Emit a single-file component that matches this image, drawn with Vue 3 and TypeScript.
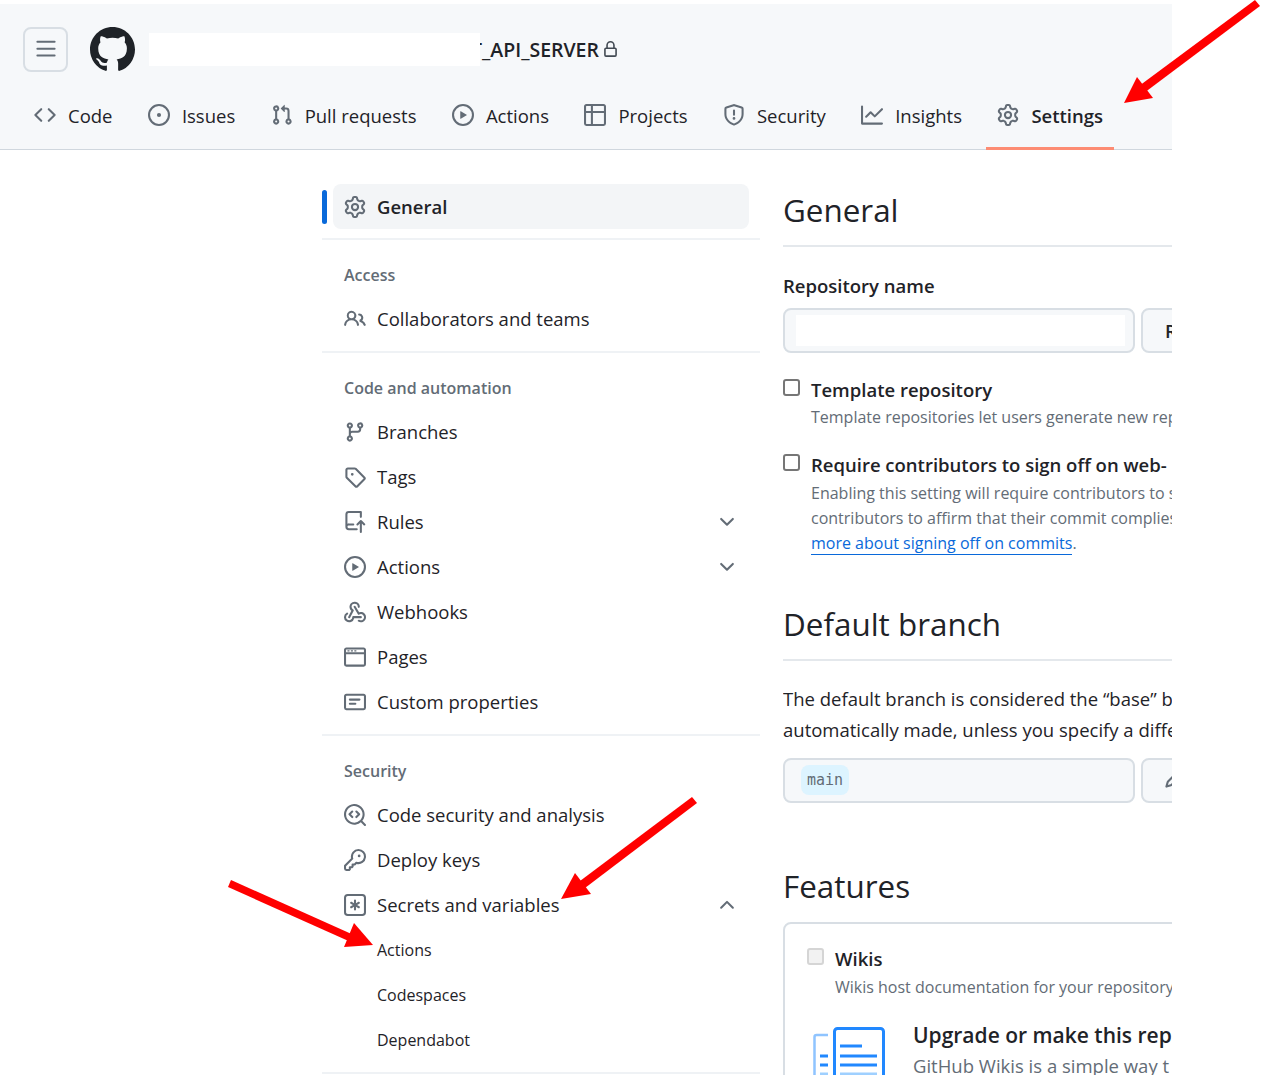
<script setup lang="ts">
type IconName = keyof typeof icons

const icons = {
  bars: 'M1 2.75A.75.75 0 0 1 1.75 2h12.5a.75.75 0 0 1 0 1.5H1.75A.75.75 0 0 1 1 2.75Zm0 5A.75.75 0 0 1 1.75 7h12.5a.75.75 0 0 1 0 1.5H1.75A.75.75 0 0 1 1 7.75ZM1.75 12h12.5a.75.75 0 0 1 0 1.5H1.75a.75.75 0 0 1 0-1.5Z',
  github: 'M8 0c4.42 0 8 3.58 8 8a8.013 8.013 0 0 1-5.45 7.59c-.4.08-.55-.17-.55-.38 0-.27.01-1.13.01-2.2 0-.75-.25-1.23-.54-1.48 1.78-.2 3.65-.88 3.65-3.95 0-.88-.31-1.59-.82-2.15.08-.2.36-1.02-.08-2.12 0 0-.67-.22-2.2.82-.64-.18-1.32-.27-2-.27-.68 0-1.36.09-2 .27-1.53-1.03-2.2-.82-2.2-.82-.44 1.1-.16 1.92-.08 2.12-.51.56-.82 1.28-.82 2.15 0 3.06 1.86 3.75 3.64 3.95-.23.2-.44.55-.51 1.07-.46.21-1.61.55-2.33-.66-.15-.24-.6-.83-1.23-.82-.67.01-.27.38.01.53.34.19.73.9.82 1.13.16.45.68 1.31 2.69.94 0 .67.01 1.3.01 1.49 0 .21-.15.45-.55.38A7.995 7.995 0 0 1 0 8c0-4.42 3.58-8 8-8Z',
  lock: 'M4 4a4 4 0 0 1 8 0v2h.25c.966 0 1.75.784 1.75 1.75v5.5A1.75 1.75 0 0 1 12.25 15h-8.5A1.75 1.75 0 0 1 2 13.25v-5.5C2 6.784 2.784 6 3.75 6H4Zm8.25 3.5h-8.5a.25.25 0 0 0-.25.25v5.5c0 .138.112.25.25.25h8.5a.25.25 0 0 0 .25-.25v-5.5a.25.25 0 0 0-.25-.25ZM10.5 6V4a2.5 2.5 0 1 0-5 0v2Z',
  code: 'm11.28 3.22 4.25 4.25a.75.75 0 0 1 0 1.06l-4.25 4.25a.749.749 0 0 1-1.275-.326.749.749 0 0 1 .215-.734L13.94 8l-3.72-3.72a.749.749 0 0 1 .326-1.275.749.749 0 0 1 .734.215Zm-6.56 0a.751.751 0 0 1 1.042.018.751.751 0 0 1 .018 1.042L2.06 8l3.72 3.72a.749.749 0 0 1-.326 1.275.749.749 0 0 1-.734-.215L.47 8.53a.75.75 0 0 1 0-1.06Z',
  issue: 'M8 9.5a1.5 1.5 0 1 0 0-3 1.5 1.5 0 0 0 0 3Z M8 0a8 8 0 1 1 0 16A8 8 0 0 1 8 0ZM1.5 8a6.5 6.5 0 1 0 13 0 6.5 6.5 0 0 0-13 0Z',
  pull: 'M1.5 3.25a2.25 2.25 0 1 1 3 2.122v5.256a2.251 2.251 0 1 1-1.5 0V5.372A2.25 2.25 0 0 1 1.5 3.25Zm5.677-.177L9.573.677A.25.25 0 0 1 10 .854V2.5h1A2.5 2.5 0 0 1 13.5 5v5.628a2.251 2.251 0 1 1-1.5 0V5a1 1 0 0 0-1-1h-1v1.646a.25.25 0 0 1-.427.177L7.177 3.427a.25.25 0 0 1 0-.354ZM3.75 2.5a.75.75 0 1 0 0 1.5.75.75 0 0 0 0-1.5Zm0 9.5a.75.75 0 1 0 0 1.5.75.75 0 0 0 0-1.5Zm8.25.75a.75.75 0 1 0 1.5 0 .75.75 0 0 0-1.5 0Z',
  play: 'M8 0a8 8 0 1 1 0 16A8 8 0 0 1 8 0ZM1.5 8a6.5 6.5 0 1 0 13 0 6.5 6.5 0 0 0-13 0Zm4.879-2.773 4.264 2.559a.25.25 0 0 1 0 .428l-4.264 2.559A.25.25 0 0 1 6 10.559V5.442a.25.25 0 0 1 .379-.215Z',
  table: 'M0 1.75C0 .784.784 0 1.75 0h12.5C15.216 0 16 .784 16 1.75v12.5A1.75 1.75 0 0 1 14.25 16H1.75A1.75 1.75 0 0 1 0 14.25ZM6.5 6.5v8h7.75a.25.25 0 0 0 .25-.25V6.5Zm8-1.5V1.75a.25.25 0 0 0-.25-.25H6.5V5Zm-13 1.5v7.75c0 .138.112.25.25.25H5v-8ZM5 5V1.5H1.75a.25.25 0 0 0-.25.25V5Z',
  shield: 'M7.467.133a1.748 1.748 0 0 1 1.066 0l5.25 1.68A1.75 1.75 0 0 1 15 3.48V7c0 1.566-.32 3.182-1.303 4.682-.983 1.498-2.585 2.813-5.032 3.855a1.697 1.697 0 0 1-1.33 0c-2.447-1.042-4.049-2.357-5.032-3.855C1.32 10.182 1 8.566 1 7V3.48a1.75 1.75 0 0 1 1.217-1.667Zm.61 1.429a.25.25 0 0 0-.153 0l-5.25 1.68a.25.25 0 0 0-.174.238V7c0 1.358.275 2.666 1.057 3.86.784 1.194 2.121 2.34 4.366 3.297a.196.196 0 0 0 .154 0c2.245-.956 3.582-2.104 4.366-3.298C13.225 9.666 13.5 8.36 13.5 7V3.48a.251.251 0 0 0-.174-.237l-5.25-1.68ZM8.75 4.75v3a.75.75 0 0 1-1.5 0v-3a.75.75 0 0 1 1.5 0ZM9 10.5a1 1 0 1 1-2 0 1 1 0 0 1 2 0Z',
  graph: 'M1.5 1.75V13.5h13.75a.75.75 0 0 1 0 1.5H.75a.75.75 0 0 1-.75-.75V1.75a.75.75 0 0 1 1.5 0Zm14.28 2.53-5.25 5.25a.75.75 0 0 1-1.06 0L7 7.06 4.28 9.78a.751.751 0 0 1-1.042-.018.751.751 0 0 1-.018-1.042l3.25-3.25a.75.75 0 0 1 1.06 0L10 7.94l4.72-4.72a.751.751 0 0 1 1.042.018.751.751 0 0 1 .018 1.042Z',
  gear: 'M8 0a8.2 8.2 0 0 1 .701.031C9.444.095 9.99.645 10.16 1.29l.288 1.107c.018.066.079.158.212.224.231.114.454.243.668.386.123.082.233.09.299.071l1.103-.303c.644-.176 1.392.021 1.82.63.27.385.506.792.704 1.218.315.675.111 1.422-.364 1.891l-.814.806c-.049.048-.098.147-.088.294.016.257.016.515 0 .772-.01.147.038.246.088.294l.814.806c.475.469.679 1.216.364 1.891a7.977 7.977 0 0 1-.704 1.217c-.428.61-1.176.807-1.82.63l-1.102-.302c-.067-.019-.177-.011-.3.071a5.909 5.909 0 0 1-.668.386c-.133.066-.194.158-.211.224l-.29 1.106c-.168.646-.715 1.196-1.458 1.26a8.006 8.006 0 0 1-1.402 0c-.743-.064-1.289-.614-1.458-1.26l-.289-1.106c-.018-.066-.079-.158-.212-.224a5.738 5.738 0 0 1-.668-.386c-.123-.082-.233-.09-.299-.071l-1.103.303c-.644.176-1.392-.021-1.82-.63a8.12 8.12 0 0 1-.704-1.218c-.315-.675-.111-1.422.363-1.891l.815-.806c.05-.048.098-.147.088-.294a6.214 6.214 0 0 1 0-.772c.01-.147-.038-.246-.088-.294l-.815-.806C.635 6.045.431 5.298.746 4.623a7.92 7.92 0 0 1 .704-1.217c.428-.61 1.176-.807 1.82-.63l1.102.302c.067.019.177.011.3-.071.214-.143.437-.272.668-.386.133-.066.194-.158.211-.224l.29-1.106C6.009.645 6.556.095 7.299.03 7.53.01 7.764 0 8 0Zm-.571 1.525c-.036.003-.108.036-.137.146l-.289 1.105c-.147.561-.549.967-.998 1.189-.173.086-.34.183-.5.29-.417.278-.97.423-1.529.27l-1.103-.303c-.109-.03-.175.016-.195.045-.22.312-.412.644-.573.99-.014.031-.021.11.059.19l.815.806c.411.406.562.957.53 1.456a4.709 4.709 0 0 0 0 .582c.032.499-.119 1.05-.53 1.456l-.815.806c-.081.08-.073.159-.059.19.162.346.353.677.573.989.02.03.085.076.195.046l1.102-.303c.56-.153 1.113-.008 1.53.27.161.107.328.204.501.29.447.222.85.629.997 1.189l.289 1.105c.029.109.101.143.137.146a6.6 6.6 0 0 0 1.142 0c.036-.003.108-.036.137-.146l.289-1.105c.147-.561.549-.967.998-1.189.173-.086.34-.183.5-.29.417-.278.97-.423 1.529-.27l1.103.303c.109.029.175-.016.195-.045.22-.313.411-.644.573-.99.014-.031.021-.11-.059-.19l-.815-.806c-.411-.406-.562-.957-.53-1.456a4.709 4.709 0 0 0 0-.582c-.032-.499.119-1.05.53-1.456l.815-.806c.081-.08.073-.159.059-.19a6.464 6.464 0 0 0-.573-.989c-.02-.03-.085-.076-.195-.046l-1.102.303c-.56.153-1.113.008-1.53-.27a4.44 4.44 0 0 0-.501-.29c-.447-.222-.85-.629-.997-1.189l-.289-1.105c-.029-.11-.101-.143-.137-.146a6.6 6.6 0 0 0-1.142 0ZM11 8a3 3 0 1 1-6 0 3 3 0 0 1 6 0ZM9.5 8a1.5 1.5 0 1 0-3.001.001A1.5 1.5 0 0 0 9.5 8Z',
  people: 'M2 5.5a3.5 3.5 0 1 1 5.898 2.549 5.508 5.508 0 0 1 3.034 4.084.75.75 0 1 1-1.482.235 4 4 0 0 0-7.9 0 .75.75 0 0 1-1.482-.236A5.507 5.507 0 0 1 3.102 8.05 3.493 3.493 0 0 1 2 5.5ZM11 4a3.001 3.001 0 0 1 2.22 5.018 5.01 5.01 0 0 1 2.56 3.012.749.749 0 0 1-.885.954.752.752 0 0 1-.549-.514 3.507 3.507 0 0 0-2.522-2.372.75.75 0 0 1-.574-.73v-.352a.75.75 0 0 1 .416-.672A1.5 1.5 0 0 0 11 5.5.75.75 0 0 1 11 4Zm-5.5-.5a2 2 0 1 0-.001 3.999A2 2 0 0 0 5.5 3.5Z',
  branch: 'M9.5 3.25a2.25 2.25 0 1 1 3 2.122V6A2.5 2.5 0 0 1 10 8.5H6a1 1 0 0 0-1 1v1.128a2.251 2.251 0 1 1-1.5 0V5.372a2.25 2.25 0 1 1 1.5 0v1.836A2.493 2.493 0 0 1 6 7h4a1 1 0 0 0 1-1v-.628A2.25 2.25 0 0 1 9.5 3.25Zm-6 0a.75.75 0 1 0 1.5 0 .75.75 0 0 0-1.5 0Zm8.25-.75a.75.75 0 1 0 0 1.5.75.75 0 0 0 0-1.5ZM4.25 12a.75.75 0 1 0 0 1.5.75.75 0 0 0 0-1.5Z',
  tag: 'M1 7.775V2.75C1 1.784 1.784 1 2.75 1h5.025c.464 0 .91.184 1.238.513l6.25 6.25a1.75 1.75 0 0 1 0 2.474l-5.026 5.026a1.75 1.75 0 0 1-2.474 0l-6.25-6.25A1.75 1.75 0 0 1 1 7.775Zm1.5 0c0 .066.026.13.073.177l6.25 6.25a.25.25 0 0 0 .354 0l5.025-5.025a.25.25 0 0 0 0-.354l-6.25-6.25a.25.25 0 0 0-.177-.073H2.75a.25.25 0 0 0-.25.25ZM6 5a1 1 0 1 1 0 2 1 1 0 0 1 0-2Z',
  rules: 'M1 2.5A2.5 2.5 0 0 1 3.5 0h8.75a.75.75 0 0 1 .75.75v3.5a.75.75 0 0 1-1.5 0V1.5h-8a1 1 0 0 0-1 1v6.708A2.493 2.493 0 0 1 3.5 9h3.25a.75.75 0 0 1 0 1.5H3.5a1 1 0 0 0 0 2h5.75a.75.75 0 0 1 0 1.5H3.5A2.5 2.5 0 0 1 1 11.5Zm13.23 7.79h-.001l-1.224-1.224v6.184a.75.75 0 0 1-1.5 0V9.066L10.28 10.29a.75.75 0 0 1-1.06-1.061l2.505-2.504a.75.75 0 0 1 1.06 0L15.29 9.23a.751.751 0 0 1-.018 1.042.751.751 0 0 1-1.042.018Z',
  webhook: 'M5.5 4.25a2.25 2.25 0 0 1 4.5 0 .75.75 0 0 0 1.5 0 3.75 3.75 0 1 0-6.14 2.889l-2.272 4.258a.75.75 0 0 0 1.324.706L7 7.25a.75.75 0 0 0-.309-1.015A2.25 2.25 0 0 1 5.5 4.25Z M7.364 3.607a.75.75 0 0 1 1.03.257l2.608 4.349a3.75 3.75 0 1 1-.628 6.785.75.75 0 0 1 .752-1.299 2.25 2.25 0 1 0-.033-3.88.75.75 0 0 1-1.03-.256L7.107 4.636a.75.75 0 0 1 .257-1.03Z M2.9 8.776A.75.75 0 0 1 2.625 9.8 2.25 2.25 0 1 0 6 11.75a.75.75 0 0 1 .75-.751h5.5a.75.75 0 0 1 0 1.5H7.425a3.751 3.751 0 1 1-5.55-3.998.75.75 0 0 1 1.024.274Z',
  browser: 'M0 2.75C0 1.784.784 1 1.75 1h12.5c.966 0 1.75.784 1.75 1.75v10.5A1.75 1.75 0 0 1 14.25 15H1.75A1.75 1.75 0 0 1 0 13.25ZM14.5 6h-13v7.25c0 .138.112.25.25.25h12.5a.25.25 0 0 0 .25-.25Zm0-1.5V2.75a.25.25 0 0 0-.25-.25H1.75a.25.25 0 0 0-.25.25V4.5ZM2.5 3h1.5v1H2.5Zm2.5 0h1.5v1H5Zm2.5 0H9v1H7.5Z',
  note: 'M0 3.75C0 2.784.784 2 1.75 2h12.5c.966 0 1.75.784 1.75 1.75v8.5A1.75 1.75 0 0 1 14.25 14H1.75A1.75 1.75 0 0 1 0 12.25Zm1.75-.25a.25.25 0 0 0-.25.25v8.5c0 .138.112.25.25.25h12.5a.25.25 0 0 0 .25-.25v-8.5a.25.25 0 0 0-.25-.25ZM3.5 6.25a.75.75 0 0 1 .75-.75h7a.75.75 0 0 1 0 1.5h-7a.75.75 0 0 1-.75-.75Zm.75 2.25h4a.75.75 0 0 1 0 1.5h-4a.75.75 0 0 1 0-1.5Z',
  codescan: 'M8.47 4.97a.75.75 0 0 0 0 1.06L9.94 7.5 8.47 8.97a.75.75 0 1 0 1.06 1.06l2-2a.75.75 0 0 0 0-1.06l-2-2a.75.75 0 0 0-1.06 0ZM6.53 6.03a.75.75 0 0 0-1.06-1.06l-2 2a.75.75 0 0 0 0 1.06l2 2a.75.75 0 1 0 1.06-1.06L5.06 7.5l1.47-1.47Z M12.246 13.307a7.501 7.501 0 1 1 1.06-1.06l2.474 2.473a.749.749 0 0 1-.326 1.275.749.749 0 0 1-.734-.215ZM1.5 7.5a6.002 6.002 0 0 0 3.608 5.504 6.002 6.002 0 0 0 6.486-1.117.748.748 0 0 1 .292-.293A6 6 0 1 0 1.5 7.5Z',
  key: 'M10.5 0a5.499 5.499 0 1 1-1.288 10.848l-.932.932a.749.749 0 0 1-.53.22H7v.75a.749.749 0 0 1-.22.53l-.5.5a.749.749 0 0 1-.53.22H5v.75a.749.749 0 0 1-.22.53l-.5.5a.749.749 0 0 1-.53.22h-2A1.75 1.75 0 0 1 0 14.25v-2c0-.199.079-.389.22-.53l4.932-4.932A5.5 5.5 0 0 1 10.5 0Zm-4 5.5c-.001.431.069.86.205 1.269a.75.75 0 0 1-.181.768L1.5 12.56v1.69c0 .138.112.25.25.25h1.69l.06-.06v-1.19a.75.75 0 0 1 .75-.75h1.19l.06-.06v-1.19a.75.75 0 0 1 .75-.75h1.19l1.023-1.025a.75.75 0 0 1 .768-.18A4 4 0 1 0 6.5 5.5ZM11 6a1 1 0 1 1 0-2 1 1 0 0 1 0 2Z',
  asterisk: 'M0 2.75A2.75 2.75 0 0 1 2.75 0h10.5A2.75 2.75 0 0 1 16 2.75v10.5A2.75 2.75 0 0 1 13.25 16H2.75A2.75 2.75 0 0 1 0 13.25ZM2.75 1.5c-.69 0-1.25.56-1.25 1.25v10.5c0 .69.56 1.25 1.25 1.25h10.5c.69 0 1.25-.56 1.25-1.25V2.75c0-.69-.56-1.25-1.25-1.25Z M8 4a.75.75 0 0 1 .75.75V6.7l1.69-.975a.75.75 0 0 1 .75 1.3L9.5 8l1.69.976a.75.75 0 0 1-.75 1.298L8.75 9.3v1.951a.75.75 0 0 1-1.5 0V9.299l-1.69.976a.75.75 0 0 1-.75-1.3L6.5 8l-1.69-.975a.75.75 0 0 1 .75-1.3l1.69.976V4.75A.75.75 0 0 1 8 4Z',
  chevronDown: 'M12.78 5.22a.749.749 0 0 1 0 1.06l-4.25 4.25a.749.749 0 0 1-1.06 0L3.22 6.28a.749.749 0 1 1 1.06-1.06L8 8.939l3.72-3.719a.749.749 0 0 1 1.06 0Z',
  chevronUp: 'M3.22 10.53a.749.749 0 0 1 0-1.06l4.25-4.25a.749.749 0 0 1 1.06 0l4.25 4.25a.749.749 0 1 1-1.06 1.06L8 6.811 4.28 10.53a.749.749 0 0 1-1.06 0Z',
  pencil: 'M11.013 1.427a1.75 1.75 0 0 1 2.474 0l1.086 1.086a1.75 1.75 0 0 1 0 2.474l-8.61 8.61c-.21.21-.47.364-.756.445l-3.251.93a.75.75 0 0 1-.927-.928l.929-3.25c.081-.286.235-.547.445-.758l8.61-8.61Zm.176 4.823L9.75 4.81l-6.286 6.287a.253.253 0 0 0-.064.108l-.558 1.953 1.953-.558a.253.253 0 0 0 .108-.064Zm1.238-3.763a.25.25 0 0 0-.354 0L10.811 3.75l1.439 1.44 1.263-1.263a.25.25 0 0 0 0-.354Z'
}

interface NavTab {
  label: string
  icon: IconName
  active?: boolean
}

interface SideItem {
  label: string
  icon?: IconName
  chevron?: 'down' | 'up'
}

interface SideGroup {
  title: string
  items: SideItem[]
}

const tabs: NavTab[] = [
  { label: 'Code', icon: 'code' },
  { label: 'Issues', icon: 'issue' },
  { label: 'Pull requests', icon: 'pull' },
  { label: 'Actions', icon: 'play' },
  { label: 'Projects', icon: 'table' },
  { label: 'Security', icon: 'shield' },
  { label: 'Insights', icon: 'graph' },
  { label: 'Settings', icon: 'gear', active: true }
]

const groups: SideGroup[] = [
  {
    title: 'Access',
    items: [{ label: 'Collaborators and teams', icon: 'people' }]
  },
  {
    title: 'Code and automation',
    items: [
      { label: 'Branches', icon: 'branch' },
      { label: 'Tags', icon: 'tag' },
      { label: 'Rules', icon: 'rules', chevron: 'down' },
      { label: 'Actions', icon: 'play', chevron: 'down' },
      { label: 'Webhooks', icon: 'webhook' },
      { label: 'Pages', icon: 'browser' },
      { label: 'Custom properties', icon: 'note' }
    ]
  },
  {
    title: 'Security',
    items: [
      { label: 'Code security and analysis', icon: 'codescan' },
      { label: 'Deploy keys', icon: 'key' },
      { label: 'Secrets and variables', icon: 'asterisk', chevron: 'up' },
      { label: 'Actions' },
      { label: 'Codespaces' },
      { label: 'Dependabot' }
    ]
  }
]
</script>

<template>
  <div class="page">
    <div class="frame">
      <header class="header">
        <div class="top">
          <button class="menu">
            <svg class="icon" viewBox="0 0 16 16"><path :d="icons.bars" /></svg>
          </button>
          <svg class="logo" viewBox="0 0 16 16"><path :d="icons.github" /></svg>
          <div class="mask"></div>
          <span class="repo">T_API_SERVER</span>
          <svg class="lock" viewBox="0 0 16 16"><path :d="icons.lock" /></svg>
        </div>
        <nav class="tabs">
          <a v-for="tab in tabs" :key="tab.label" class="tab" :class="{ active: tab.active }">
            <svg class="icon" viewBox="0 0 16 16"><path :d="icons[tab.icon]" /></svg>
            <span>{{ tab.label }}</span>
          </a>
        </nav>
      </header>

      <main class="main">
        <aside class="side">
          <div class="general-row">
            <span class="marker"></span>
            <div class="general">
              <svg class="icon" viewBox="0 0 16 16"><path :d="icons.gear" /></svg>
              <span>General</span>
            </div>
          </div>
          <section v-for="group in groups" :key="group.title" class="group">
            <h3 class="group-title">{{ group.title }}</h3>
            <a v-for="item in group.items" :key="item.label + group.title" class="item" :class="{ sub: !item.icon }">
              <svg v-if="item.icon" class="icon" viewBox="0 0 16 16"><path :d="icons[item.icon]" /></svg>
              <span>{{ item.label }}</span>
              <svg v-if="item.chevron" class="chevron" viewBox="0 0 16 16">
                <path :d="item.chevron === 'up' ? icons.chevronUp : icons.chevronDown" />
              </svg>
            </a>
          </section>
        </aside>

        <div class="content">
          <h2 class="heading">General</h2>
          <label class="field-label">Repository name</label>
          <div class="field-row">
            <div class="input"><div class="redacted"></div></div>
            <button class="side-btn">Rename</button>
          </div>

          <div class="check first">
            <span class="box"></span>
            <div>
              <div class="check-title">Template repository</div>
              <p class="note">Template repositories let users generate new rep</p>
            </div>
          </div>
          <div class="check second">
            <span class="box"></span>
            <div>
              <div class="check-title">Require contributors to sign off on web-</div>
              <p class="note">Enabling this setting will require contributors to s</p>
              <p class="note">contributors to affirm that their commit complies</p>
              <p class="note"><a class="link">more about signing off on commits</a>.</p>
            </div>
          </div>

          <h2 class="heading branch">Default branch</h2>
          <p class="body">The default branch is considered the “base” b</p>
          <p class="body">automatically made, unless you specify a diffe</p>
          <div class="field-row branch-row">
            <div class="input"><code class="chip">main</code></div>
            <button class="side-btn pen">
              <svg class="icon" viewBox="0 0 16 16"><path :d="icons.pencil" /></svg>
            </button>
          </div>

          <h2 class="features">Features</h2>
          <div class="card">
            <div class="check">
              <span class="box disabled"></span>
              <div>
                <div class="check-title">Wikis</div>
                <p class="note wiki-note">Wikis host documentation for your repository</p>
              </div>
            </div>
            <div class="upgrade">
              <svg class="wiki-art" viewBox="0 0 72 60" fill="none">
                <path d="M15 8H3.5a2 2 0 0 0-2 2v50" stroke="#8fc4ff" stroke-width="2.5" />
                <rect x="21.5" y="1.5" width="49" height="70" rx="3" stroke="#2188ff" stroke-width="3" />
                <path d="M27 19h22M27 29h37M27 38h37" stroke="#2188ff" stroke-width="3" />
                <path d="M27 47h37" stroke="#9fd0ff" stroke-width="3" />
                <path d="M7 29h8M7 38h8" stroke="#2188ff" stroke-width="3" />
                <path d="M7 47h8" stroke="#9fd0ff" stroke-width="3" />
              </svg>
              <div>
                <div class="upgrade-title">Upgrade or make this rep</div>
                <p class="upgrade-text">GitHub Wikis is a simple way t</p>
              </div>
            </div>
          </div>
        </div>
      </main>
    </div>

    <!-- red annotation arrows drawn over the screenshot -->
    <svg class="arrows" viewBox="0 0 1261 1075">
      <g fill="#ff0000" stroke="none">
        <path d="M1255 0l5 6-116 87-5-7Z" />
        <path d="M1124 103l13-26 16 21Z" />
        <path d="M692 797l5 6-116 88-5-7Z" />
        <path d="M561 899l14-26 16 21Z" />
        <path d="M231 880l-3 7 125 56 3-7Z" />
        <path d="M373 945l-19-22-10 24Z" />
      </g>
    </svg>
  </div>
</template>

<style>
html,
body {
  margin: 0;
  background: #fff;
}
</style>

<style scoped>
.page {
  position: relative;
  width: 1261px;
  height: 1075px;
  overflow: hidden;
  background: #fff;
  color: #1f2328;
  font-family: 'Open Sans', 'Noto Sans', sans-serif;
  font-size: 18.5px;
}

.frame {
  width: 1172px;
  height: 1075px;
  overflow: hidden;
}

.icon {
  flex: none;
  width: 22px;
  height: 22px;
  fill: #636c76;
}

.header {
  margin-top: 4px;
  height: 146px;
  box-sizing: border-box;
  background: #f6f8fa;
  border-bottom: 1px solid #d0d7de;
}

.top {
  display: flex;
  align-items: center;
  height: 90px;
  padding-left: 23px;
}

.menu {
  display: flex;
  align-items: center;
  justify-content: center;
  width: 45px;
  height: 45px;
  padding: 0;
  background: #f6f8fa;
  border: 2px solid #d8dee4;
  border-radius: 8px;
}

.logo {
  width: 45px;
  height: 45px;
  margin-left: 22px;
  fill: #1f2328;
}

.mask {
  position: relative;
  z-index: 1;
  width: 331px;
  height: 33px;
  margin-left: 14px;
  margin-top: 1px;
  background: #fff;
}

.repo {
  margin-left: -9px;
  font-size: 19.5px;
  font-weight: 600;
}

.lock {
  width: 17px;
  height: 17px;
  margin-left: 3px;
  margin-top: 1px;
  fill: #424a53;
}

.tabs {
  display: flex;
  gap: 13.4px;
  padding-left: 23px;
}

.tab {
  display: flex;
  align-items: center;
  gap: 12px;
  height: 56px;
  box-sizing: border-box;
  padding: 0 11px 14px;
  white-space: nowrap;
  color: #1f2328;
}

.tab.active {
  font-weight: 600;
  padding-bottom: 11px;
  border-bottom: 3px solid #fd8c73;
}

.main {
  display: flex;
  padding-top: 34px;
  padding-left: 322px;
}

.side {
  flex: none;
  width: 438px;
}

.general-row {
  display: flex;
  align-items: center;
  gap: 6px;
  height: 45px;
  padding-bottom: 9px;
  border-bottom: 2px solid #eff2f5;
}

.marker {
  width: 5px;
  height: 34px;
  border-radius: 3px;
  background: #0969da;
}

.general {
  display: flex;
  align-items: center;
  gap: 11px;
  width: 416px;
  height: 45px;
  box-sizing: border-box;
  padding-left: 11px;
  border-radius: 8px;
  background: #f3f5f7;
  font-weight: 600;
}

.group {
  padding-bottom: 9px;
  border-bottom: 2px solid #eff2f5;
}

.group-title {
  margin: 0;
  height: 57px;
  padding: 13px 0 0 22px;
  box-sizing: border-box;
  line-height: 44px;
  font-size: 16px;
  font-weight: 600;
  color: #636c76;
}

.item {
  display: flex;
  align-items: center;
  gap: 11px;
  height: 45px;
  box-sizing: border-box;
  padding: 0 22px 2px;
  color: #1f2328;
  white-space: nowrap;
}

.item.sub {
  padding-left: 55px;
  font-size: 16px;
}

.chevron {
  width: 22px;
  height: 22px;
  margin-left: auto;
  fill: #636c76;
}

.content {
  flex: 1;
  min-width: 0;
  margin-left: 23px;
  overflow: hidden;
  white-space: nowrap;
}

.heading {
  margin: 0 0 25px;
  height: 63px;
  box-sizing: border-box;
  padding-top: 4px;
  font-size: 31.4px;
  line-height: 44px;
  font-weight: 400;
  border-bottom: 2px solid #e4e8ec;
}

.heading.branch {
  margin-top: 42px;
  margin-bottom: 22px;
}

.field-label {
  display: block;
  font-weight: 600;
  line-height: 28px;
}

.field-row {
  display: flex;
  gap: 6px;
  margin-top: 8px;
}

.input {
  flex: none;
  box-sizing: border-box;
  width: 352px;
  height: 45px;
  padding: 5px 8px 5px 11px;
  background: #f6f8fa;
  border: 2px solid #d8dee4;
  border-radius: 8px;
}

.redacted {
  height: 31px;
  background: #fff;
}

.side-btn {
  flex: none;
  width: 100px;
  height: 45px;
  padding: 0 0 0 22px;
  text-align: left;
  background: #f6f8fa;
  border: 2px solid #d8dee4;
  border-radius: 8px;
  font: inherit;
  font-weight: 600;
  color: #1f2328;
}

.side-btn.pen {
  padding-left: 21px;
}

.check {
  display: flex;
  gap: 11px;
}

.check.first {
  margin-top: 23px;
}

.check.second {
  margin-top: 21px;
}

.box {
  flex: none;
  width: 17px;
  height: 17px;
  margin-top: 3px;
  background: #fff;
  border: 2px solid #767676;
  border-radius: 3px;
  box-sizing: border-box;
}

.box.disabled {
  background: #f2f2f2;
  border-color: #d5d5d5;
}

.check-title {
  margin-bottom: 1px;
  font-weight: 600;
  line-height: 28px;
}

.check.second .check-title {
  margin-bottom: 2px;
}

.note {
  margin: 0;
  font-size: 16px;
  line-height: 25px;
  color: #636c76;
}

.wiki-note {
  margin-top: 2px;
}

.link {
  color: #0969da;
  border-bottom: 1px solid #0969da;
}

.body {
  margin: 0;
  line-height: 31px;
}

.branch-row {
  margin-top: 13px;
}

.chip {
  display: inline-block;
  padding: 0 6px;
  height: 30px;
  line-height: 30px;
  margin-left: 5px;
  border-radius: 8px;
  background: #ddf4ff;
  color: #636c76;
  font-family: 'DejaVu Sans Mono', 'Liberation Mono', monospace;
  font-size: 15px;
}

.features {
  margin: 61px 0 14px;
  font-size: 31.4px;
  line-height: 44px;
  font-weight: 400;
}

.card {
  width: 500px;
  height: 300px;
  box-sizing: border-box;
  padding: 21px 22px;
  border: 2px solid #d8dee4;
  border-radius: 8px;
}

.upgrade {
  display: flex;
  gap: 28px;
  margin-top: 20px;
  padding-left: 6px;
}

.wiki-art {
  flex: none;
  width: 72px;
  height: 60px;
  margin-top: 7px;
}

.upgrade-title {
  font-size: 21px;
  font-weight: 600;
  line-height: 30px;
}

.upgrade-text {
  margin: 0;
  line-height: 32px;
  color: #636c76;
}

.arrows {
  position: absolute;
  top: 0;
  left: 0;
  width: 1261px;
  height: 1075px;
  pointer-events: none;
}
</style>
